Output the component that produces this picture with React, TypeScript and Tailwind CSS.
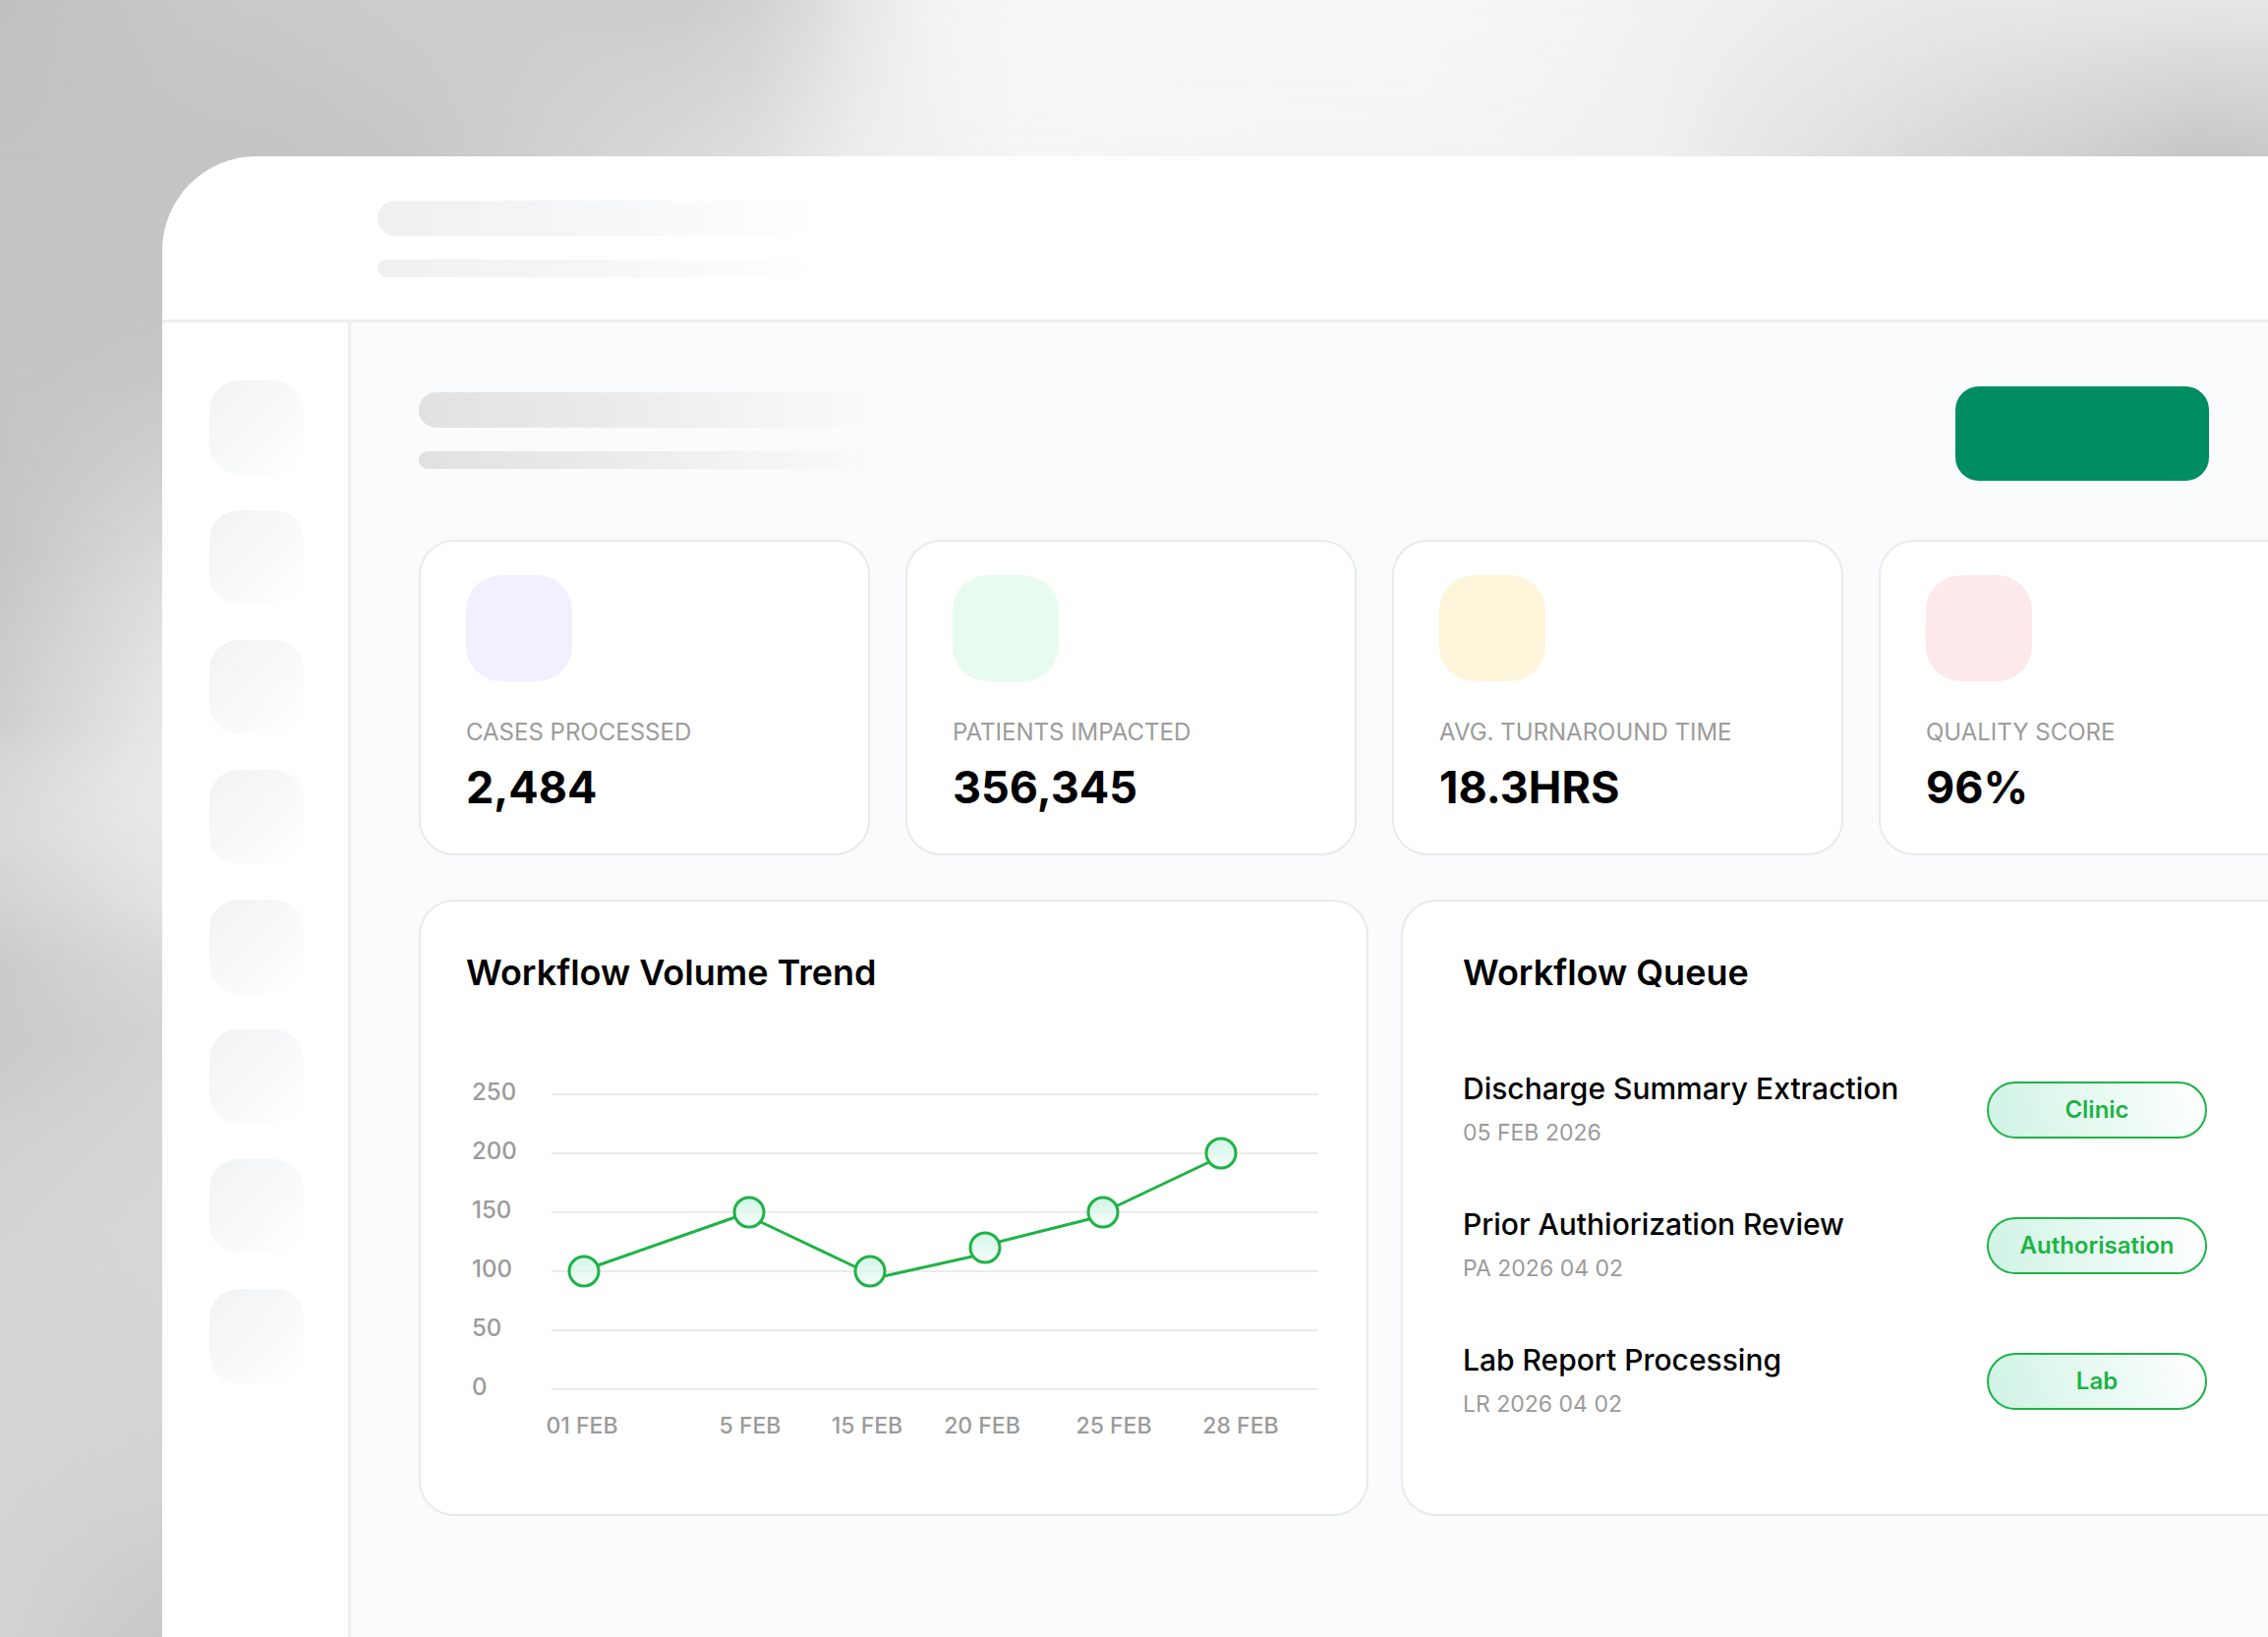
type Stop = [offset: number, color: string];

interface Stat {
  label: string;
  value: string;
  tile: string;
}

interface QueueItem {
  title: string;
  ref: string;
  tag: string;
}

const stats: Stat[] = [
  { label: 'CASES PROCESSED', value: '2,484', tile: 'bg-[#f2f0fe]' },
  { label: 'PATIENTS IMPACTED', value: '356,345', tile: 'bg-[#e7fbef]' },
  { label: 'AVG. TURNAROUND TIME', value: '18.3HRS', tile: 'bg-[#fdf6da]' },
  { label: 'QUALITY SCORE', value: '96%', tile: 'bg-[#fde8ea]' },
];

const queue: QueueItem[] = [
  { title: 'Discharge Summary Extraction', ref: '05 FEB 2026', tag: 'Clinic' },
  { title: 'Prior Authiorization Review', ref: 'PA 2026 04 02', tag: 'Authorisation' },
  { title: 'Lab Report Processing', ref: 'LR 2026 04 02', tag: 'Lab' },
];

const gridRows = [250, 200, 150, 100, 50, 0];

const days = [
  { label: '01 FEB', x: 118 },
  { label: '5 FEB', x: 289 },
  { label: '15 FEB', x: 408 },
  { label: '20 FEB', x: 525 },
  { label: '25 FEB', x: 659 },
  { label: '28 FEB', x: 788 },
];

const points = [
  { x: 120, y: 203 },
  { x: 288, y: 143 },
  { x: 411, y: 203 },
  { x: 528, y: 179 },
  { x: 648, y: 143 },
  { x: 768, y: 83 },
];

const segments = [
  'M134 197L274 148',
  'M300 153L397 199',
  'M425 208L515 188',
  'M542 173L634 150',
  'M661 137L758 91',
];

// Backdrop shades along the top edge, the window's top edge and both sides of the left strip
const topEdge: Stop[] = [
  [0, '#bfbfbf'], [8, '#c8c8c8'], [20, '#cdcdcd'], [30, '#cbcbcb'], [33, '#d0d0d0'], [36, '#dcdcdc'],
  [38, '#e7e7e7'], [41, '#f2f2f2'], [45, '#f6f6f6'], [62, '#f7f7f7'], [68, '#f4f4f4'], [77, '#eeeeee'],
  [86, '#e8e8e8'], [100, '#e6e6e6'],
];
const topInner: Stop[] = [
  [0, '#c3c3c3'], [12, '#c5c5c5'], [18, '#c8c8c8'], [25, '#d2d2d2'], [33, '#dfdfdf'], [38, '#eeeeee'],
  [45, '#f6f6f6'], [62, '#f5f5f5'], [73, '#f0f0f0'], [78, '#e6e6e6'], [85, '#dadada'], [92, '#cfcfcf'],
  [97, '#c6c6c6'], [100, '#c9c9c9'],
];
const leftOuter: Stop[] = [
  [0, '#c2c2c2'], [20, '#c5c5c5'], [34, '#c6c6c6'], [39, '#cbcbcb'], [44, '#cfcfcf'], [47, '#d7d7d7'],
  [51, '#dadada'], [55, '#d3d3d3'], [59, '#cbcbcb'], [64, '#cacaca'], [70, '#d1d1d1'], [80, '#d6d6d6'],
  [100, '#d3d3d3'],
];
const leftInner: Stop[] = [
  [0, '#c5c5c5'], [18, '#c4c4c4'], [24, '#c9c9c9'], [29, '#d0d0d0'], [36, '#dedede'], [43, '#e6e6e6'],
  [49, '#eaeaea'], [55, '#e2e2e2'], [59, '#d8d8d8'], [63, '#d2d2d2'], [75, '#d8d8d8'], [91, '#d2d2d2'],
  [96, '#cccccc'], [100, '#c8c8c8'],
];

const Gradient = ({ id, stops, vertical }: { id: string; stops: Stop[]; vertical?: boolean }) => (
  <linearGradient id={id} x1="0" y1="0" x2={vertical ? 0 : 1} y2={vertical ? 1 : 0}>
    {stops.map(([offset, color]) => (
      <stop key={offset} offset={`${offset}%`} stopColor={color} />
    ))}
  </linearGradient>
);

const Backdrop = () => (
  <svg className="absolute inset-0 size-full" viewBox="0 0 2307 1665" preserveAspectRatio="none" aria-hidden="true">
    <defs>
      <Gradient id="top-edge" stops={topEdge} />
      <Gradient id="top-inner" stops={topInner} />
      <Gradient id="left-outer" stops={leftOuter} vertical />
      <Gradient id="left-inner" stops={leftInner} vertical />
      <linearGradient id="fade-right">
        <stop offset="0" stopColor="#000" />
        <stop offset="1" stopColor="#fff" />
      </linearGradient>
      <linearGradient id="fade-down" x1="0" y1="0" x2="0" y2="1">
        <stop offset="0" stopColor="#fff" />
        <stop offset="1" stopColor="#000" />
      </linearGradient>
      <mask id="mask-left" maskUnits="userSpaceOnUse" x="0" y="0" width="2307" height="1665">
        <rect width="166" height="1665" fill="url(#fade-right)" />
        <rect x="165" width="2142" height="1665" fill="#fff" />
      </mask>
      <mask id="mask-edge" maskUnits="userSpaceOnUse" x="0" y="0" width="2307" height="160">
        <rect width="2307" height="160" fill="url(#fade-down)" />
      </mask>
      <mask id="mask-inner" maskUnits="userSpaceOnUse" x="0" y="0" width="2307" height="400">
        <rect width="2307" height="161" fill="#fff" />
        <rect y="160" width="2307" height="240" fill="url(#fade-down)" />
      </mask>
    </defs>
    <rect width="2307" height="1665" fill="url(#left-outer)" />
    <rect width="2307" height="1665" fill="url(#left-inner)" mask="url(#mask-left)" />
    <rect width="2307" height="400" fill="url(#top-inner)" mask="url(#mask-inner)" />
    <rect width="2307" height="160" fill="url(#top-edge)" mask="url(#mask-edge)" />
  </svg>
);

const TrendChart = () => (
  <svg className="w-full" viewBox="0 0 870 390" role="img" aria-label="Workflow Volume Trend">
    <defs>
      <linearGradient id="dot" x1="0" y1="0" x2="0" y2="1">
        <stop offset="0" stopColor="#c8f2e0" />
        <stop offset="1" stopColor="#f4fdf9" />
      </linearGradient>
    </defs>
    {gridRows.map((value, i) => (
      <g key={value}>
        <text x="6" y={29 + i * 60} className="fill-[#9b9b9b] text-2xl font-medium">{value}</text>
        <rect x="87" y={22 + i * 60} width="780" height="2" fill="#ebebeb" />
      </g>
    ))}
    {days.map(day => (
      <text key={day.label} x={day.x} y="368" textAnchor="middle" className="fill-[#9b9b9b] text-[23px] font-medium">{day.label}</text>
    ))}
    {segments.map(d => (
      <path key={d} d={d} stroke="#1eb346" strokeWidth="3" />
    ))}
    {points.map(point => (
      <circle key={point.x} cx={point.x} cy={point.y} r="15" fill="url(#dot)" fillOpacity="0.8" stroke="#1eb346" strokeWidth="3" />
    ))}
  </svg>
);

export default function App() {
  return (
    <div className="relative flex min-h-screen overflow-hidden bg-[#cccccc] pt-[159px] pl-[165px] font-['Inter','Liberation_Sans',sans-serif] text-black">
      <Backdrop />

      <div className="relative flex min-w-0 flex-1 flex-col overflow-hidden rounded-tl-[96px] bg-white">
        <header className="flex h-[169px] flex-col gap-6 border-b-[3px] border-[#eeeeee] pt-[45px] pl-[219px]">
          <div className="h-9 w-[460px] rounded-l-full bg-linear-to-r from-[#f0f0f0] via-[#f6f7f9] to-white" />
          <div className="h-[18px] w-[460px] rounded-l-full bg-linear-to-r from-[#f0f0f0] via-[#f6f7f7] to-white" />
        </header>

        <div className="flex flex-1">
          <nav className="flex w-48 shrink-0 flex-col gap-9 border-r-[3px] border-[#eeeeee] pt-[59px] pl-12">
            {Array.from({ length: 8 }, (_, i) => (
              <div key={i} className="size-24 rounded-[30px] bg-linear-to-br from-[#f1f2f3] via-[#f8f9fa] to-white" />
            ))}
          </nav>

          <main className="min-w-0 flex-1 bg-[#f9fbfc] pt-[65px] pr-[60px] pl-[69px]">
            <div className="flex items-start justify-between">
              <div className="flex flex-col gap-6 pt-1.5">
                <div className="h-9 w-[460px] rounded-l-full bg-linear-to-r from-[#e1e1e1] via-[#ededed] to-[#f9fbfc]" />
                <div className="h-[18px] w-[460px] rounded-l-full bg-linear-to-r from-[#e1e1e1] via-[#ededed] to-[#f9fbfc]" />
              </div>
              <button type="button" aria-label="New workflow" className="h-24 w-[258px] rounded-3xl bg-[#008d61]" />
            </div>

            {/* Both card rows run past the right edge of the window */}
            <section className="mt-[60px] -mr-[123px] grid grid-cols-4 gap-9">
              {stats.map(stat => (
                <div key={stat.label} className="h-[321px] rounded-[36px] border-2 border-[#e9ebeb] bg-white px-[46px] pt-[34px]">
                  <div className={`size-[108px] rounded-[36px] ${stat.tile}`} />
                  <p className="mt-9 text-2xl whitespace-nowrap text-[#9b9b9b]">{stat.label}</p>
                  <p className="mt-3 text-[45px]/[56px] font-bold">{stat.value}</p>
                </div>
              ))}
            </section>

            <section className="mt-[45px] -mr-[123px] grid grid-cols-[966fr_945fr] gap-[33px] pb-[123px]">
              <div className="min-h-[627px] rounded-[36px] border-2 border-[#e9ebeb] bg-white px-[46px] pt-[50px]">
                <h2 className="text-4xl/[44px] font-semibold">Workflow Volume Trend</h2>
                <div className="mt-[79px]">
                  <TrendChart />
                </div>
              </div>

              <div className="min-h-[627px] rounded-[36px] border-2 border-[#e9ebeb] bg-white pt-[50px] pr-[123px] pl-[61px]">
                <h2 className="text-4xl/[44px] font-semibold">Workflow Queue</h2>
                <ul className="mt-[78px] flex flex-col gap-[58px]">
                  {queue.map(item => (
                    <li key={item.title} className="flex h-20 items-center justify-between">
                      <div>
                        <p className="text-3xl/[40px] font-medium whitespace-nowrap">{item.title}</p>
                        <p className="mt-1.5 text-[23px]/[38px] text-[#9b9b9b]">{item.ref}</p>
                      </div>
                      <span className="flex h-[58px] w-56 items-center justify-center rounded-full border-2 border-[#1eb346] bg-linear-75 from-[#cff3e5] to-white text-2xl font-semibold text-[#1eb346]">
                        {item.tag}
                      </span>
                    </li>
                  ))}
                </ul>
              </div>
            </section>
          </main>
        </div>
      </div>
    </div>
  );
}
